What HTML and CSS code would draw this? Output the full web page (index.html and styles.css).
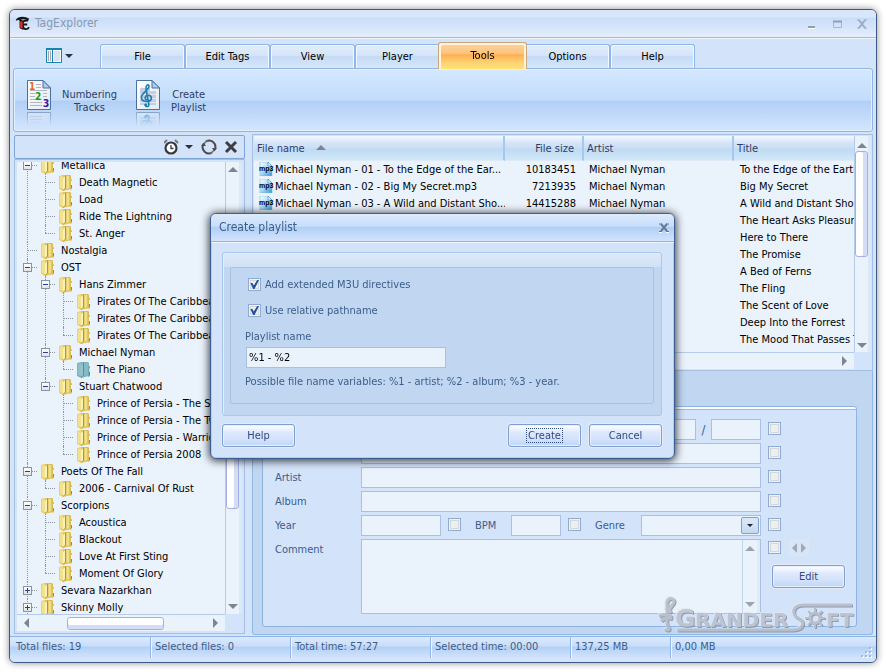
FILE: index.html
```html
<!DOCTYPE html>
<html lang="en">
<head>
<meta charset="utf-8">
<title>TagExplorer</title>
<link rel="stylesheet" href="styles.css">
</head>
<body>
<svg class="defs" aria-hidden="true">
  <defs>
    <linearGradient id="gold" x1="0" x2="1"><stop offset="0" stop-color="#ecd272"/><stop offset="1" stop-color="#d8b84a"/></linearGradient>
    <linearGradient id="gold-leaf" x1="0" x2="1"><stop offset="0" stop-color="#e2c65c"/><stop offset=".5" stop-color="#f6e99c"/><stop offset="1" stop-color="#d9b94c"/></linearGradient>
    <linearGradient id="page" x1="0" x2="1" y1="0" y2="1"><stop offset="0" stop-color="#fff"/><stop offset="1" stop-color="#e3e9f2"/></linearGradient>
    <linearGradient id="mp3g" x1="0" x2="1" y1="0" y2="1"><stop offset="0" stop-color="#fff"/><stop offset=".4" stop-color="#bfe2f5"/><stop offset="1" stop-color="#2f93cf"/></linearGradient>
    <symbol id="folder" viewBox="0 0 14 16">
      <path d="M0 1L4 0H11L12 1V14L4 16L0 14Z" fill="url(#gold)"/>
      <path d="M1 2L4 1V14L1 13Z" fill="#f3e190"/>
      <path d="M4 3L7 0V13L4 16Z" fill="#b8942c"/>
      <path d="M4 3L6 1V13L4 15Z" fill="#fbf2b8"/>
      <path d="M7 1H11V13L7 14Z" fill="url(#gold-leaf)"/>
      <path d="M11 5L13 4V14L11 15Z" fill="#dcbc52"/>
      <path d="M12.500 6V10" stroke="#fff"/><path d="M12.500 10V13" stroke="#3aa0d8"/>
    </symbol>
    <symbol id="folder-open" viewBox="0 0 14 16">
      <path d="M0 1L4 0H11L12 1V14L4 16L0 14Z" fill="#7fb3c0"/>
      <path d="M1 2L4 1V14L1 13Z" fill="#8fc0ca"/>
      <path d="M4 3L7 0V13L4 16Z" fill="#55909f"/>
      <path d="M4 3L6 1V13L4 15Z" fill="#94c4cc"/>
      <path d="M7 1H11V13L7 14Z" fill="#86b9c4"/>
      <path d="M11 5L13 4V14L11 15Z" fill="#6fa8b8"/>
      <path d="M12.500 6V10" stroke="#b9dcea"/><path d="M12.500 10V13" stroke="#2f8fd0"/>
    </symbol>
    <symbol id="mp3" viewBox="0 0 14 14">
      <path d="M1 0H9L13 4V14H1Z" fill="url(#mp3g)" stroke="#7dbde0" stroke-width=".6"/>
      <path d="M9 0V4H13Z" fill="#e8f6fd" stroke="#3d9bd0" stroke-width=".7"/>
    </symbol>
    <symbol id="numdoc" viewBox="0 0 24 30">
      <path d="M.5 .5H16L23.500 8V29.500H.5Z" fill="url(#page)" stroke="#4d6f9c"/>
      <path d="M16 .5V8H23.500Z" fill="#a9cdf0" stroke="#4d6f9c"/>
      <path d="M9 4.500H14M9 7.500H14M3 10.500H20M3 13.500H8M16 13.500H20M3 16.500H8M16 16.500H20M3 19.500H15M3 22.500H15M3 25.500H15" stroke="#b4b7bd"/>
    </symbol>
    <symbol id="musicdoc" viewBox="0 0 24 30">
      <path d="M.5 .5H16L23.500 8V29.500H.5Z" fill="url(#page)" stroke="#4d6f9c"/>
      <path d="M16 .5V8H23.500Z" fill="#a9cdf0" stroke="#4d6f9c"/>
      <path d="M4 8H14V11H20V25H4Z" fill="#c3cee0"/>
      <path d="M4 14.500H20M4 18.500H20M4 22.500H20" stroke="#dfe7f3"/>
      <path d="M9 25C10 27.500 13.500 27 12.800 24L10 9C9.500 5 12.500 3.500 13 6C13.500 9.500 6 12.500 5.500 17C5 22.500 14.500 23 15.300 18.500C15.800 15 10.500 14 9.300 17C8.700 18.500 9.700 19.700 10.500 19.800" fill="none" stroke="#1e7fb4" stroke-width="1.600" stroke-linecap="round"/>
      <circle cx="9.800" cy="25" r="1.400" fill="#1e7fb4"/>
    </symbol>
    <linearGradient id="fade" x1="0" x2="0" y1="0" y2="1"><stop offset="0" stop-color="#fff"/><stop offset="1" stop-color="#000"/></linearGradient>
    <mask id="fade-mask" maskUnits="userSpaceOnUse" x="0" y="32" width="24" height="14"><path d="M0 32H24V46H0Z" fill="url(#fade)"/></mask>
  </defs>
</svg>

<main class="window">
  <header class="titlebar">
    <svg class="app-icon" viewBox="0 0 16 16" aria-hidden="true">
      <path d="M1 4C3 0 11 0 15 3L14 5C11 3 8 3 6 4L9 5V15L5 13V5C4 4 3 4 1 5Z" fill="#161616"/>
      <path d="M5 6H9V13L5 12Z" fill="#c01818"/>
      <path d="M14 5C9 4 7 7 8 10C9 15 13 15 15 12M8 9H13" fill="none" stroke="#161616" stroke-width="2"/>
      <path d="M7 6V13" stroke="#e03428" stroke-width="2"/>
    </svg>
    <h1>TagExplorer</h1>
    <div class="win-buttons">
      <button aria-label="Minimize"><svg viewBox="0 0 12 10"><path d="M2 9.500H9" stroke="#fff"/><path d="M2 8H9" stroke="#8f9fb5" stroke-width="2"/></svg></button>
      <button aria-label="Maximize"><svg viewBox="0 0 12 10"><path d="M2.500 2.500H10.500V8.500H2.500Z" fill="none" stroke="#aab6c8"/><path d="M2 2.500H11" stroke="#8f9fb5" stroke-width="2"/></svg></button>
      <button aria-label="Close"><svg viewBox="0 0 12 10"><path d="M3 1L9 9M9 1L3 9" stroke="#9aabc4" stroke-width="2"/><path d="M1 1H4M8 1H11M1 9H4M8 9H11" stroke="#9aabc4"/></svg></button>
    </div>
  </header>

  <nav class="tabs" aria-label="Sections">
    <button class="layout-button" aria-label="Layout">
      <svg viewBox="0 0 28 16"><path d="M.5 .5H15.500V14.500H.5Z" fill="#f5fafd" stroke="#1783ae"/><path d="M0 1H16" stroke="#1783ae" stroke-width="2"/><path d="M2 4H6M2 6H6M2 8H6M2 10H6M2 12H6" stroke="#4a5568" stroke-dasharray="1 1"/><path d="M6.500 2V14" stroke="#1783ae"/><path d="M8 3H14V13H8Z" fill="#d7e3ee"/><path d="M19 6H27L23 10Z" fill="#2b3242"/></svg>
    </button>
    <button class="tab">File</button>
    <button class="tab">Edit Tags</button>
    <button class="tab">View</button>
    <button class="tab">Player</button>
    <button class="tab tab-active">Tools</button>
    <button class="tab">Options</button>
    <button class="tab">Help</button>
  </nav>

  <section class="ribbon" aria-label="Tools">
    <button class="ribbon-item">
      <span class="ribbon-icon">
        <svg viewBox="0 0 24 46"><use href="#numdoc" width="24" height="30"/>
          <text class="num num-1" x="2" y="10">1</text><text class="num num-2" x="8" y="20">2</text><text class="num num-3" x="16" y="27">3</text>
          <g class="mirror" mask="url(#fade-mask)"><use href="#numdoc" width="24" height="30" transform="translate(0 62) scale(1 -1)"/></g></svg>
      </span>
      <span>Numbering<br>Tracks</span>
    </button>
    <button class="ribbon-item">
      <span class="ribbon-icon">
        <svg viewBox="0 0 24 46"><use href="#musicdoc" width="24" height="30"/>
          <g class="mirror" mask="url(#fade-mask)"><use href="#musicdoc" width="24" height="30" transform="translate(0 62) scale(1 -1)"/></g></svg>
      </span>
      <span>Create<br>Playlist</span>
    </button>
  </section>

  <div class="workspace">
    <aside class="browser">
      <div class="browser-tools">
        <button aria-label="History"><svg class="clock" viewBox="0 0 30 16"><circle cx="7" cy="9" r="5.500" fill="#fff" stroke="#38393c" stroke-width="2.200"/><path d="M0 4L3 1M14 4L11 1" stroke="#77797d" stroke-width="2"/><path d="M7 6V9.500H9.500" fill="none" stroke="#38393c" stroke-width="1.300"/><path d="M21 6H29L25 10Z" fill="#2b3242"/></svg></button>
        <button aria-label="Refresh"><svg class="tool" viewBox="0 0 16 16"><path d="M5 2.400A6.300 6.300 0 0 1 14 10M11 13.600A6.300 6.300 0 0 1 2 6" fill="none" stroke="#4a4c50" stroke-width="2"/><path d="M7 1.800A6.300 6.300 0 0 0 3 5M9 14.200A6.300 6.300 0 0 0 13 11" fill="none" stroke="#6c6e73" stroke-width="1.400"/><path d="M0 7L2.500 3.500L5 7ZM11 9L13.500 12.500L16 9Z" fill="#4a4c50"/></svg></button>
        <button aria-label="Close panel"><svg class="tool" viewBox="0 0 16 16"><path d="M3 3L13 13M13 3L3 13" stroke="#3c3e42" stroke-width="3"/></svg></button>
      </div>
      <div class="browser-body">
        <div class="tree-view">
          <ul class="tree">
            <li><div class="node"><button class="toggle" aria-label="Collapse"></button><svg class="folder"><use href="#folder"/></svg>Metallica</div>
              <ul>
                <li><div class="node"><svg class="folder"><use href="#folder"/></svg>Death Magnetic</div></li>
                <li><div class="node"><svg class="folder"><use href="#folder"/></svg>Load</div></li>
                <li><div class="node"><svg class="folder"><use href="#folder"/></svg>Ride The Lightning</div></li>
                <li><div class="node"><svg class="folder"><use href="#folder"/></svg>St. Anger</div></li>
              </ul></li>
            <li><div class="node"><svg class="folder"><use href="#folder"/></svg>Nostalgia</div></li>
            <li><div class="node"><button class="toggle" aria-label="Collapse"></button><svg class="folder"><use href="#folder"/></svg>OST</div>
              <ul>
                <li><div class="node"><button class="toggle" aria-label="Collapse"></button><svg class="folder"><use href="#folder"/></svg>Hans Zimmer</div>
                  <ul>
                    <li><div class="node"><svg class="folder"><use href="#folder"/></svg>Pirates Of The Caribbean</div></li>
                    <li><div class="node"><svg class="folder"><use href="#folder"/></svg>Pirates Of The Caribbean</div></li>
                    <li><div class="node"><svg class="folder"><use href="#folder"/></svg>Pirates Of The Caribbean</div></li>
                  </ul></li>
                <li><div class="node"><button class="toggle" aria-label="Collapse"></button><svg class="folder"><use href="#folder"/></svg>Michael Nyman</div>
                  <ul>
                    <li><div class="node"><svg class="folder"><use href="#folder-open"/></svg><span class="selected">The Piano</span></div></li>
                  </ul></li>
                <li><div class="node"><button class="toggle" aria-label="Collapse"></button><svg class="folder"><use href="#folder"/></svg>Stuart Chatwood</div>
                  <ul>
                    <li><div class="node"><svg class="folder"><use href="#folder"/></svg>Prince of Persia - The Sa</div></li>
                    <li><div class="node"><svg class="folder"><use href="#folder"/></svg>Prince of Persia - The Tw</div></li>
                    <li><div class="node"><svg class="folder"><use href="#folder"/></svg>Prince of Persia - Warrio</div></li>
                    <li><div class="node"><svg class="folder"><use href="#folder"/></svg>Prince of Persia 2008</div></li>
                  </ul></li>
              </ul></li>
            <li><div class="node"><button class="toggle" aria-label="Collapse"></button><svg class="folder"><use href="#folder"/></svg>Poets Of The Fall</div>
              <ul>
                <li><div class="node"><svg class="folder"><use href="#folder"/></svg>2006 - Carnival Of Rust</div></li>
              </ul></li>
            <li><div class="node"><button class="toggle" aria-label="Collapse"></button><svg class="folder"><use href="#folder"/></svg>Scorpions</div>
              <ul>
                <li><div class="node"><svg class="folder"><use href="#folder"/></svg>Acoustica</div></li>
                <li><div class="node"><svg class="folder"><use href="#folder"/></svg>Blackout</div></li>
                <li><div class="node"><svg class="folder"><use href="#folder"/></svg>Love At First Sting</div></li>
                <li><div class="node"><svg class="folder"><use href="#folder"/></svg>Moment Of Glory</div></li>
              </ul></li>
            <li><div class="node"><button class="toggle toggle-plus" aria-label="Expand"></button><svg class="folder"><use href="#folder"/></svg>Sevara Nazarkhan</div></li>
            <li><div class="node"><button class="toggle toggle-plus" aria-label="Expand"></button><svg class="folder"><use href="#folder"/></svg>Skinny Molly</div></li>
          </ul>
        </div>
        <div class="vbar vbar-tree"><i class="up"></i><div class="rail"><b></b></div><i class="down"></i></div>
        <div class="hbar hbar-tree"><i class="left"></i><div class="rail"><b></b></div><i class="right"></i></div>
      </div>
    </aside>

    <div class="content">
      <section class="files">
        <div class="file-view">
          <table class="file-table">
            <colgroup><col class="col-name"><col class="col-size"><col class="col-artist"><col></colgroup>
            <thead><tr><th>File name<i class="sort"></i></th><th class="size">File size</th><th>Artist</th><th>Title</th></tr></thead>
            <tbody>
              <tr><td><span class="mp3"><svg><use href="#mp3"/></svg><b>mp3</b></span>Michael Nyman - 01 - To the Edge of the Ear...</td><td class="size">10183451</td><td>Michael Nyman</td><td>To the Edge of the Earth</td></tr>
              <tr><td><span class="mp3"><svg><use href="#mp3"/></svg><b>mp3</b></span>Michael Nyman - 02 - Big My Secret.mp3</td><td class="size">7213935</td><td>Michael Nyman</td><td>Big My Secret</td></tr>
              <tr><td><span class="mp3"><svg><use href="#mp3"/></svg><b>mp3</b></span>Michael Nyman - 03 - A Wild and Distant Sho...</td><td class="size">14415288</td><td>Michael Nyman</td><td>A Wild and Distant Shore</td></tr>
              <tr><td><span class="mp3"><svg><use href="#mp3"/></svg></span></td><td></td><td></td><td>The Heart Asks Pleasure</td></tr>
              <tr><td></td><td></td><td></td><td>Here to There</td></tr>
              <tr><td></td><td></td><td></td><td>The Promise</td></tr>
              <tr><td></td><td></td><td></td><td>A Bed of Ferns</td></tr>
              <tr><td></td><td></td><td></td><td>The Fling</td></tr>
              <tr><td></td><td></td><td></td><td>The Scent of Love</td></tr>
              <tr><td></td><td></td><td></td><td>Deep Into the Forrest</td></tr>
              <tr><td></td><td></td><td></td><td>The Mood That Passes Through You</td></tr>
              <tr><td></td><td></td><td></td><td>Lost and Found</td></tr>
            </tbody>
          </table>
        </div>
        <div class="vbar vbar-files"><i class="up"></i><div class="rail"><b></b></div><i class="down"></i></div>
        <div class="hbar hbar-files"><i class="left"></i><div class="rail"></div><i class="right"></i></div>
      </section>

      <section class="editor" aria-label="Tag editor">
        <form class="editor-panel">
          <label for="track">Track</label>
          <div class="fields"><input id="track" class="grow" type="text"><span class="slash">/</span><input class="w-small" type="text" aria-label="Track count"></div>
          <div class="side"><input type="checkbox" aria-label="Write track"></div>
          <label for="title">Title</label>
          <div class="fields"><input id="title" class="grow" type="text"></div>
          <div class="side"><input type="checkbox" aria-label="Write title"></div>
          <label for="artist">Artist</label>
          <div class="fields"><input id="artist" class="grow" type="text"></div>
          <div class="side"><input type="checkbox" aria-label="Write artist"></div>
          <label for="album">Album</label>
          <div class="fields"><input id="album" class="grow" type="text"></div>
          <div class="side"><input type="checkbox" aria-label="Write album"></div>
          <label for="year">Year</label>
          <div class="fields">
            <input id="year" class="w-medium" type="text"><input class="inline-check" type="checkbox" aria-label="Write year">
            <label class="bpm" for="bpm">BPM</label><input id="bpm" class="w-small" type="text"><input class="inline-check" type="checkbox" aria-label="Write BPM">
            <label class="genre" for="genre">Genre</label>
            <div class="combo"><select id="genre"><option></option></select><span class="combo-arrow"></span></div>
          </div>
          <div class="side"><input type="checkbox" aria-label="Write genre"></div>
          <label for="comment">Comment</label>
          <div class="fields comment-box"><textarea id="comment"></textarea><div class="vbar vbar-comment"><i class="up"></i><div class="rail"></div><i class="down"></i></div></div>
          <div class="side side-tall">
            <div class="side-row"><input type="checkbox" aria-label="Write comment"><span class="spin"><button type="button" aria-label="Previous"><i class="left"></i></button><button type="button" aria-label="Next"><i class="right"></i></button></span></div>
            <button type="button" class="push">Edit</button>
          </div>
        </form>
      </section>
    </div>
  </div>

  <footer class="status">
    <span class="cell">Total files: 19</span><span class="cell">Selected files: 0</span><span class="cell">Total time: 57:27</span><span class="cell">Selected time: 00:00</span><span class="cell cell-short">137,25 MB</span><span class="cell cell-last">0,00 MB</span>
    <svg class="grip" viewBox="0 0 12 12" aria-hidden="true"><path d="M9 1H11V3H9ZM5 5H7V7H5ZM9 5H11V7H9ZM1 9H3V11H1ZM5 9H7V11H5ZM9 9H11V11H9Z" fill="#fff"/><path d="M8 0H10V2H8ZM4 4H6V6H4ZM8 4H10V6H8ZM0 8H2V10H0ZM4 8H6V10H4ZM8 8H10V10H8Z" fill="#a5b6d0"/></svg>
  </footer>

  <svg class="watermark" viewBox="0 0 204 42" role="img" aria-label="GranderSoft">
    <g class="mark">
      <path d="M9 15C12 12 9 9 10 6C12 1 18 2 17 6C16 10 10 11 14 17M2 20C7 18 11 18 15 21M4 25C8 21 12 21 15 23M10 15C12 20 7 27 12 32C13 34 10 35 8 33" fill="none" stroke-width="3"/>
      <text class="mark-big" x="18" y="31">G</text>
      <text class="mark-text" x="38" y="31">RANDER</text>
      <path d="M195 9H147C134 9 135 19 141 22C149 26 146 34 136 34H20" fill="none" stroke-width="3"/>
      <circle cx="158" cy="22" r="5" fill="none" stroke-width="3"/>
      <path d="M158 12V16M158 28V32M148 22H152M164 22H168M151 15L154 18M162 26L165 29M151 29L154 26M162 18L165 15" stroke-width="2"/>
      <text class="mark-text" x="169" y="31">FT</text>
    </g>
  </svg>
</main>

<div class="overlay">
  <section class="dialog" role="dialog" aria-labelledby="dialog-title">
    <header class="dialog-title"><h2 id="dialog-title">Create playlist</h2>
      <button aria-label="Close dialog"><svg viewBox="0 0 12 10"><path d="M1 9.500H4M8 9.500H11" stroke="#fff"/><path d="M3 1L9 8M9 1L3 8" stroke="#637a9e" stroke-width="2"/><path d="M1 1H4M8 1H11M1 8.500H4M8 8.500H11" stroke="#637a9e"/></svg></button>
    </header>
    <form class="dialog-body">
      <div class="dialog-panel">
        <div class="dialog-group">
          <label class="check"><input type="checkbox" checked>Add extended M3U directives</label>
          <label class="check"><input type="checkbox" checked>Use relative pathname</label>
          <label class="caption" for="playlist">Playlist name</label>
          <input id="playlist" class="playlist-name" type="text" value="%1 - %2">
          <p>Possible file name variables: %1 - artist; %2 - album; %3 - year.</p>
        </div>
      </div>
      <div class="dialog-actions"><button type="button" class="push">Help</button><button type="button" class="push push-default"><span>Create</span></button><button type="button" class="push">Cancel</button></div>
    </form>
  </section>
</div>
</body>
</html>
```
FILE: styles.css
```css
* { box-sizing: border-box; }
:root {
  --ink: #3b5d8c;
  --line: #a4bfe3;
  --field: #eaf2fc;
  --face: #d3e3fa;
  --deep: #c1d7f1;
}
html, body { height: 100%; }
body {
  margin: 0;
  padding: 9px;
  background: #fff;
  color: #000;
  font: 11px/17px "DejaVu Sans Condensed", "Noto Sans", sans-serif;
}
button, input, select, textarea { font: inherit; color: inherit; margin: 0; border-radius: 0; }
button { padding: 0; border: 0; background: none; }
h1, h2, p, ul { margin: 0; padding: 0; font-weight: normal; }
ul { list-style: none; }
svg { display: block; }
.defs { position: absolute; width: 0; height: 0; }

.window {
  position: relative;
  display: flex;
  flex-direction: column;
  height: 100%;
  border: 1px solid #3c5a85;
  border-radius: 6px;
  background: var(--face);
  box-shadow: 0 0 7px rgba(0, 0, 0, .45);
  overflow: hidden;
}

.titlebar {
  display: flex;
  align-items: center;
  flex: none;
  height: 28px;
  padding: 0 8px 0 5px;
  border-bottom: 1px solid #9dbce6;
  background: linear-gradient(#d9e7fa 0 7px, #c9dcf8 8px, #e4eefc);
  box-shadow: 0 1px #eff5fd;
}
.app-icon { width: 15px; height: 15px; margin-right: 5px; }
.titlebar h1 { flex: 1; font-size: 12px; color: #8698b2; }
.win-buttons { display: flex; gap: 13px; }
.win-buttons svg, .dialog-title svg { width: 12px; height: 10px; }

.tabs { display: flex; align-items: flex-end; flex: none; height: 30px; padding-left: 36px; }
.layout-button { width: 54px; height: 24px; }
.layout-button svg { width: 28px; height: 16px; }
.tab {
  width: 85px;
  height: 24px;
  border: 1px solid #8db7e8;
  border-bottom: 0;
  border-radius: 3px 3px 0 0;
  background: linear-gradient(#e2edfb, #d5e5f9 45%, #c6dbf6 50%, #d6e6fa);
  box-shadow: inset 1px 1px #f2f8ff, inset -1px 0 #f2f8ff;
}
.tab-active {
  z-index: 1;
  width: 89px;
  height: 27px;
  margin: 0 -2px -1px;
  padding-bottom: 2px;
  border-color: #c9a77c;
  background: linear-gradient(#fcd3a0, #fcc37f 42%, #fdb052 45%, #fed171 75%, #ffe477);
  box-shadow: inset 2px 2px #fff3dc, inset -2px 0 #fff3dc;
}

.ribbon {
  display: flex;
  gap: 19px;
  flex: none;
  height: 64px;
  margin: 0 3px;
  padding: 11px 13px 0;
  border: 1px solid #94b5e0;
  border-radius: 3px;
  background: linear-gradient(#d5e8ff, #c2dcfb 50%, #b1cff6 52%, #d3e6fe);
  box-shadow: inset 0 0 0 1px #e2f0ff;
}
.ribbon-item { display: flex; align-items: flex-start; gap: 11px; line-height: 13px; color: #2c3d68; }
.ribbon-item > span:last-child { margin-top: 8px; }
.ribbon-icon svg { width: 24px; height: 46px; }
.num { font: bold 10px "DejaVu Sans Condensed", sans-serif; }
.num-1 { fill: #ee6a14; }
.num-2 { fill: #0a9a1a; }
.num-3 { fill: #3413a4; }
.mirror { opacity: .5; }

.workspace { display: flex; flex: 1; min-height: 0; gap: 7px; padding: 2px 3px 1px 4px; }

.browser { display: flex; flex-direction: column; flex: none; width: 231px; padding: 1px 0; }
.browser-tools {
  display: flex;
  align-items: center;
  justify-content: flex-end;
  gap: 6px;
  flex: none;
  height: 24px;
  padding-right: 5px;
  border: 1px solid #7fa4d6;
  border-radius: 2px;
}
.clock { width: 30px; height: 16px; margin-right: 1px; }
.tool { width: 16px; height: 16px; }
.browser-body {
  display: grid;
  grid-template: minmax(0, 1fr) 17px / minmax(0, 1fr) 17px;
  flex: 1;
  min-height: 0;
  padding: 2px;
  border: 1px solid var(--line);
  background: var(--face);
}
.tree-view { overflow: hidden; background: var(--field); }
.tree { margin-top: -5px; padding-left: 5px; }
.tree ul { padding-left: 18px; }
.tree li { position: relative; }
.tree li::before {
  content: "";
  position: absolute;
  top: 0;
  bottom: 0;
  left: 5px;
  border-left: 1px dotted #8d95a0;
}
.tree ul li:last-child::before { bottom: auto; height: 8px; }
.node { position: relative; display: flex; align-items: center; height: 17px; padding-left: 19px; white-space: nowrap; }
.node::before {
  content: "";
  position: absolute;
  top: 8px;
  left: 5px;
  width: 10px;
  border-top: 1px dotted #8d95a0;
}
.folder { flex: none; width: 14px; height: 16px; margin-right: 6px; }
.toggle {
  position: relative;
  flex: none;
  width: 9px;
  height: 9px;
  margin: 0 9px 0 -18px;
  border: 1px solid #8795a8;
  background: linear-gradient(#fff, #dfe3e8);
}
.toggle::before, .toggle-plus::after { content: ""; position: absolute; top: 3px; left: 1px; width: 5px; height: 1px; background: #2b3f94; }
.toggle-plus::after { top: 1px; left: 3px; width: 1px; height: 5px; }
.selected { margin-left: -3px; padding: 0 5px 0 3px; background: #f0f0f0; }

.up, .down, .left, .right { display: block; width: 0; height: 0; border: 5px solid transparent; }
.up { border-top: 0; border-bottom-color: #7b8593; }
.down { border-bottom: 0; border-top-color: #7b8593; }
.left { border-left: 0; border-right-color: #7b8593; }
.right { border-right: 0; border-left-color: #7b8593; }
.vbar, .hbar { display: flex; align-items: center; background: #eaf2fc; }
.vbar { flex-direction: column; padding: 5px 0; border-left: 1px solid #b4cbea; border-right: 3px solid #dbe8fa; }
.hbar { padding: 0 7px; border-top: 1px solid #b4cbea; }
.rail { position: relative; flex: 1; display: flex; align-self: stretch; }
.rail b { border: 1px solid #a5aee5; border-radius: 3px; background: #fff; }
.vbar .rail { flex-direction: column; margin: 3px 0; }
.vbar .rail b { width: 13px; box-shadow: inset -4px 0 #d3def6; }
.hbar .rail b { height: 13px; align-self: center; box-shadow: inset 0 -4px #d3def6; }
.vbar-tree .rail { padding-bottom: 92px; }
.vbar-tree .rail b { flex: 1; margin-top: 213px; }
.hbar-tree .rail b { width: 97px; margin-left: 38px; }

.content { display: flex; flex-direction: column; flex: 1; min-width: 0; }
.files {
  display: grid;
  grid-template: minmax(0, 1fr) 17px / minmax(0, 1fr) 17px;
  flex: 1;
  min-height: 0;
  padding: 1px;
  border: 1px solid var(--line);
  background: var(--face);
}
.file-view { overflow: hidden; background: var(--field); }
.file-table { width: 100%; table-layout: fixed; border-collapse: separate; border-spacing: 0; white-space: nowrap; }
.col-name { width: 251px; }
.col-size { width: 79px; }
.col-artist { width: 150px; }
th {
  height: 25px;
  padding: 0 3px;
  border-right: 2px solid #a6c7f2;
  border-bottom: 1px solid #dfeaf8;
  background: linear-gradient(#f3f8fe, #d5e4f7 30%, #cbdff5 48%, #bfdaf3 55%, #d0e8f8);
  color: #2c3d68;
  font-weight: normal;
  text-align: left;
}
th:last-child { border-right-width: 0; }
td { height: 17px; padding: 0 0 0 5px; overflow: hidden; }
th.size, td.size { padding-right: 8px; text-align: right; }
td:last-child { padding-left: 6px; }
.sort { display: inline-block; margin-left: 11px; border: 5px solid transparent; border-top: 0; border-bottom-color: #7b8593; vertical-align: 2px; }
.mp3 { position: relative; display: inline-block; width: 16px; height: 14px; vertical-align: -3px; }
.mp3 svg { width: 14px; height: 14px; }
.mp3 b { position: absolute; top: 1px; left: 0; font: bold 7px/12px "Liberation Sans", sans-serif; }
.vbar-files { padding: 7px 0 4px; }
.vbar-files .rail b { height: 106px; }

.editor {
  flex: none;
  padding: 35px 15px 7px 9px;
  border: 1px solid #8fb8e2;
  border-top: 0;
  border-radius: 0 0 3px 3px;
  background: var(--deep);
}
.editor-panel {
  display: grid;
  grid-template-columns: 86px minmax(0, 1fr) 77px;
  grid-auto-rows: minmax(21px, auto);
  row-gap: 3px;
  padding: 12px 11px 12px 12px;
  border: 1px solid #8eb3e0;
  border-radius: 3px;
  background: linear-gradient(#f8fcff 0 2px, #9bbce0 2px 3px, var(--face) 3px);
  color: var(--ink);
}
.editor-panel > label { line-height: 21px; }
.fields { display: flex; align-items: center; margin-right: 7px; }
input[type="text"], textarea, select {
  height: 21px;
  padding: 0 2px;
  border: 1px solid #a9c0e0;
  background: var(--field);
  outline: 0;
}
.grow { flex: 1; min-width: 0; }
.w-small { width: 50px; }
.w-medium { width: 80px; }
.slash { width: 15px; text-align: center; font-size: 13px; }
.side { padding-top: 3px; }
input[type="checkbox"] {
  display: block;
  position: relative;
  flex: none;
  appearance: none;
  width: 13px;
  height: 13px;
  border: 1px solid #8fabd4;
  background: #edf0f0;
  box-shadow: inset 0 0 0 1px #edf2f8, inset 0 0 0 2px #d6d6d6;
}
input[type="checkbox"]:checked::after {
  content: "";
  position: absolute;
  inset: 1px;
  background: #1d519c;
  clip-path: polygon(5% 35%, 25% 30%, 42% 60%, 80% 0, 100% 0, 50% 100%, 35% 100%);
}
.inline-check { margin: 0 14px 2px 7px; }
.bpm { width: 36px; }
.genre { width: 46px; }
.combo { position: relative; flex: 1; }
.combo select { display: block; width: 100%; appearance: none; }
.combo-arrow {
  position: absolute;
  top: 2px;
  right: 2px;
  width: 18px;
  height: 17px;
  border: 1px solid #7fa2d3;
  border-radius: 2px;
  background: linear-gradient(#dce8f8, #c5d9f2);
  pointer-events: none;
}
.combo-arrow::after { content: ""; position: absolute; top: 6px; left: 5px; border: 3px solid transparent; border-top-color: #1d2430; border-bottom: 0; }
.comment-box { position: relative; height: 75px; }
.comment-box textarea { width: 100%; height: 100%; resize: none; }
.vbar-comment { position: absolute; inset: 1px 1px 1px auto; width: 18px; padding: 6px 0; opacity: .7; }
.side-tall { padding-top: 0; }
.side-row { display: flex; align-items: center; height: 17px; gap: 8px; }
.spin { display: flex; align-items: center; justify-content: center; gap: 4px; width: 20px; height: 17px; background: #dfe7f2; opacity: .6; }
.push {
  width: 73px;
  height: 23px;
  border: 1px solid #7f9fd0;
  border-radius: 3px;
  background: linear-gradient(#fff, #dfe9fd 35%, #d5e2fc 65%, #c0d6f6);
  box-shadow: inset 0 0 0 1px #e6f0fe, 0 0 0 1px #e2ecfb;
  color: #2f4a80;
}
.side-tall .push { margin: 9px 0 0 4px; }
.push-default span { display: inline-block; padding: 0 1px; border: 1px dotted #2f4a80; line-height: 13px; }

.status {
  display: flex;
  flex: none;
  height: 26px;
  padding: 0 3px;
  border-top: 1px solid #8fb6ea;
  background: linear-gradient(#dbe9fc, #c9defa 35%, #b3d1f7 42%, #d3e4fb 85%);
  color: var(--ink);
}
.cell { width: 140px; height: 21px; padding-left: 4px; border-right: 1px solid #8fb6ea; line-height: 20px; box-shadow: 1px 0 #f0f6ff; }
.cell:first-child { width: 138px; padding-left: 3px; }
.cell-short { width: 100px; }
.cell-last { flex: 1; border: 0; box-shadow: none; }
.grip { align-self: flex-end; width: 12px; height: 12px; margin-bottom: 3px; }

.watermark { position: absolute; right: 15px; bottom: 24px; width: 204px; height: 42px; pointer-events: none; }
.mark { fill: #b9c0cb; stroke: #b3bac6; filter: drop-shadow(1px 1px 0 #8591a6) drop-shadow(-1px -1px 0 #dfe6f0); opacity: .85; }
.mark text { stroke: none; font-family: "DejaVu Sans", sans-serif; font-weight: bold; }
.mark-big { font-size: 25px; }
.mark-text { font-size: 20px; }

.overlay { position: fixed; inset: 0 1px 0 0; display: grid; place-items: center; }
.dialog {
  width: 465px;
  max-width: 100%;
  border: 1px solid #3c5f93;
  border-radius: 6px;
  background: var(--face);
  box-shadow: inset 0 0 0 1px #b3cdf0, 0 1px 8px 1px rgba(0, 0, 0, .75);
  color: var(--ink);
}
.dialog-title {
  display: flex;
  align-items: center;
  justify-content: space-between;
  height: 28px;
  padding: 0 4px 0 8px;
  border-bottom: 1px solid #8fb5e8;
  border-radius: 5px 5px 0 0;
  background: linear-gradient(#dceafd, #c8defb 45%, #b1cff6 50%, #d2e4fc);
  box-shadow: 0 1px #f0f6ff;
}
.dialog-title h2 { font-size: 12px; }
.dialog-body { padding: 10px 12px 11px 11px; }
.dialog-panel {
  padding: 14px 7px 11px;
  border: 1px solid #a9c8ea;
  border-radius: 3px;
  background: linear-gradient(#dce8f7, #d1e1f5 14px, var(--deep) 14px);
  box-shadow: inset 1px 1px #e2edfa;
}
.dialog-group { padding: 8px 14px 13px; border: 1px solid #aac2e1; border-radius: 2px; }
.check { display: flex; align-items: center; gap: 4px; height: 17px; margin: 0 0 9px 3px; }
.caption { display: block; }
.playlist-name { display: block; width: 200px; margin: 2px 0 5px 1px; color: #000; }
.dialog-actions { display: flex; gap: 8px; margin-top: 8px; }
.dialog-actions .push:first-child { margin-right: auto; }
```
